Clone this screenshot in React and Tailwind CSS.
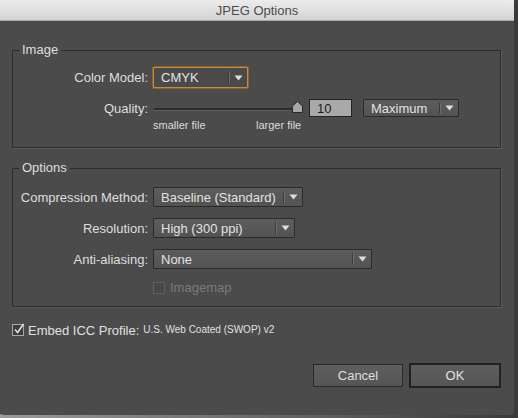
import React from 'react';

const font = { fontFamily: '"Liberation Sans", Arial, sans-serif' };

function Dropdown({ width, text, focus }) {
  return (
    <div
      className={`relative flex items-center h-full rounded-[1px] border ${
        focus ? 'border-[#c98b3c] bg-[#4a4a4a] shadow-[0_0_0_1px_#8a6230]' : 'border-[#2a2a2a] bg-gradient-to-b from-[#5c5c5c] to-[#535353]'
      }`}
      style={{ width }}
    >
      <span className="pl-[7px] text-[13px] text-[#e2e2e2] leading-none">{text}</span>
      <div className="absolute right-[17px] top-[3px] bottom-[3px] flex">
        <div className="w-px bg-[#3a3a3a]" />
        <div className="w-px bg-[#6e6e6e]" />
      </div>
      <svg className="absolute right-[4px] top-1/2 -translate-y-1/2" width="9" height="6" viewBox="0 0 9 6">
        <path d="M0.5 0.5 H8.5 L4.5 5.5 Z" fill="#dedede" />
      </svg>
    </div>
  );
}

function Checkbox({ checked, disabled }) {
  return (
    <div
      className={`relative w-[12px] h-[12px] border ${
        disabled ? 'border-[#5e5e5e] bg-[#484848]' : 'border-[#a8a8a8] bg-[#3e3e3e]'
      }`}
    >
      {checked && (
        <svg className="absolute -top-[2px] left-[0px]" width="12" height="12" viewBox="0 0 12 12">
          <path d="M2 6.5 L4.6 9.5 L10.5 1" stroke="#e6e6e6" strokeWidth="1.5" fill="none" />
        </svg>
      )}
    </div>
  );
}

function Label({ children }) {
  return <div className="w-[140px] text-right pr-[5px] text-[13px] text-[#dedede] leading-none">{children}</div>;
}

export default function App() {
  return (
    <div className="w-[518px] h-[418px] bg-[#3a3a3a] relative overflow-hidden" style={font}>
      <div className="absolute left-0 right-0 bottom-0 h-[4px] bg-gradient-to-r from-[#9a9a9a] via-[#6a6a6a] to-[#3a3a3a]" />
      <div className="relative w-[514px] h-[415px] bg-[#4b4b4b] rounded-b-[4px] flex flex-col">
        {/* title bar */}
        <div className="h-[21px] flex items-center justify-center bg-gradient-to-b from-[#ececec] to-[#d4d4d4] border-b border-[#a9a9a9]">
          <span className="text-[13px] text-[#4c4c4c] pt-px">JPEG Options</span>
        </div>

        <div className="flex flex-col pl-[12px] pr-[13px]">
          {/* Image */}
          <fieldset className="mt-[21px] h-[106px] border border-[#2c2c2c] rounded-[1px] shadow-[1px_1px_0_#5a5a5a]">
            <legend className="ml-[6px] px-[3px] text-[13px] leading-[16px] text-[#dedede]">Image</legend>
            <div className="flex items-center h-[21px] mt-[9px]">
              <Label>Color Model:</Label>
              <Dropdown width={95} text="CMYK" focus />
            </div>
            <div className="flex items-center h-[18px] mt-[11px]">
              <Label>Quality:</Label>
              <div className="relative w-[150px] h-full">
                <div className="absolute left-[1px] right-[4px] top-[9px] h-[3px] bg-[#2b2b2b] border-b border-[#5c5c5c]" />
                <svg className="absolute left-[139px] top-[2px]" width="11" height="12" viewBox="0 0 11 12">
                  <path d="M0.5 11.5 V5 L5.5 0.5 L10.5 5 V11.5 Z" fill="#a6a6a6" stroke="#2a2a2a" />
                </svg>
              </div>
              <div className="ml-[6px] w-[43px] h-full bg-[#a9a9a9] border border-[#242424] flex items-center pl-[7px] text-[13px] text-[#1c1c1c] leading-none">10</div>
              <div className="ml-[11px] h-full">
                <Dropdown width={96} text="Maximum" />
              </div>
            </div>
            <div className="flex text-[11px] leading-[13px] text-[#dcdcdc] mt-[2px] pl-[140px]">
              <span className="w-[103px]">smaller file</span>
              <span>larger file</span>
            </div>
          </fieldset>

          {/* Options */}
          <fieldset className="mt-[12px] h-[147px] border border-[#2c2c2c] rounded-[1px] shadow-[1px_1px_0_#5a5a5a]">
            <legend className="ml-[6px] px-[3px] text-[13px] leading-[16px] text-[#dedede]">Options</legend>
            <div className="flex items-center h-[20px] mt-[11px]">
              <Label>Compression Method:</Label>
              <Dropdown width={150} text="Baseline (Standard)" />
            </div>
            <div className="flex items-center h-[20px] mt-[11px]">
              <Label>Resolution:</Label>
              <Dropdown width={142} text="High (300 ppi)" />
            </div>
            <div className="flex items-center h-[20px] mt-[11px]">
              <Label>Anti-aliasing:</Label>
              <Dropdown width={219} text="None" />
            </div>
            <div className="flex items-center h-[13px] mt-[12px] pl-[140px]">
              <Checkbox disabled />
              <span className="ml-[5px] text-[13px] leading-none text-[#7a7a7a]">Imagemap</span>
            </div>
          </fieldset>

          {/* ICC */}
          <div className="flex items-center mt-[16px] h-[14px]">
            <Checkbox checked />
            <span className="ml-[4px] text-[13px] leading-none text-[#e0e0e0]">Embed ICC Profile:</span>
            <span className="ml-[4px] text-[10px] leading-none text-[#e0e0e0]">U.S. Web Coated (SWOP) v2</span>
          </div>

          {/* buttons */}
          <div className="flex justify-end items-center mt-[26px]">
            <button className="w-[90px] h-[23px] border border-[#2a2a2a] bg-gradient-to-b from-[#5e5e5e] to-[#555555] text-[13px] text-[#dedede]">
              Cancel
            </button>
            <button className="ml-[6px] w-[92px] h-[25px] border-2 border-[#222222] bg-gradient-to-b from-[#5e5e5e] to-[#555555] text-[13px] text-[#e2e2e2]">
              OK
            </button>
          </div>
        </div>
      </div>
    </div>
  );
}
